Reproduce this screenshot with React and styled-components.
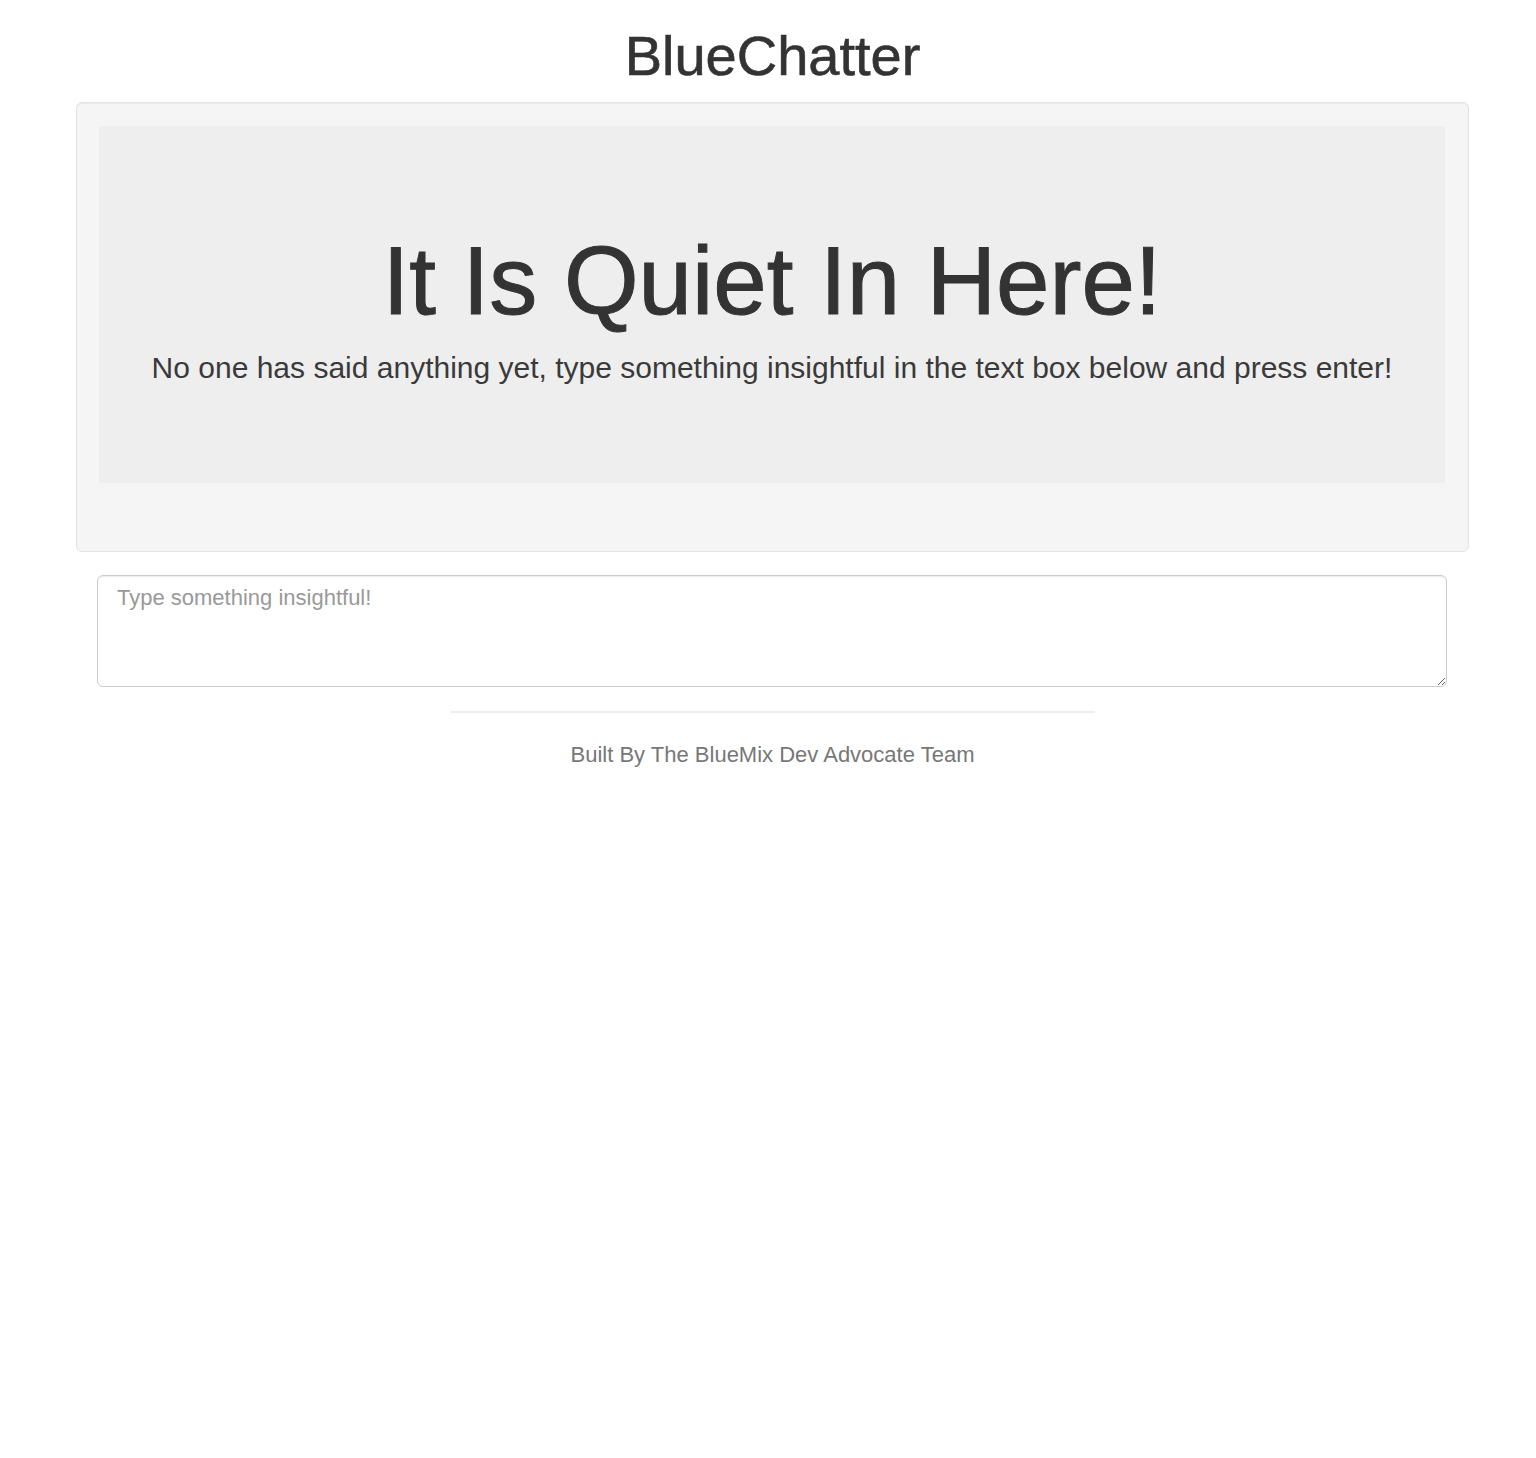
import React from 'react';
import styled, { createGlobalStyle } from 'styled-components';

const GlobalStyle = createGlobalStyle`
  html, body {
    margin: 0;
    padding: 0;
    background: #ffffff;
  }
  body {
    font-family: "Liberation Sans", Arial, Helvetica, sans-serif;
    color: #333333;
  }
  * {
    box-sizing: border-box;
  }
`;

const Page = styled.div`
  padding: 0 67px 40px 76px;
`;

const Title = styled.h1`
  margin: 0;
  padding-top: 25px;
  font-size: 56px;
  font-weight: 400;
  line-height: 62px;
  text-align: center;
  color: #333333;
  -webkit-text-stroke: 0.6px #333333;
`;

const Well = styled.div`
  margin-top: 15px;
  padding: 23px 23px 68px 22px;
  background: #f5f5f5;
  border: 1px solid #e3e3e3;
  border-radius: 6px;
  box-shadow: inset 0 1px 1px rgba(0, 0, 0, 0.05);
`;

const Jumbotron = styled.div`
  padding: 102px 20px 93px;
  background: #eeeeee;
  text-align: center;
`;

const Heading = styled.h2`
  margin: 0;
  font-size: 96px;
  font-weight: 400;
  line-height: 106px;
  color: #333333;
  -webkit-text-stroke: 1px #333333;
`;

const Lead = styled.p`
  margin: 11px 0 0;
  font-size: 30px;
  font-weight: 300;
  line-height: 45px;
  white-space: nowrap;
  color: #3a3a3a;
`;

const MessageBox = styled.textarea`
  display: block;
  width: calc(100% - 43px);
  height: 112px;
  margin: 23px 22px 0 21px;
  padding: 7px 19px;
  font-family: "Liberation Sans", Arial, Helvetica, sans-serif;
  font-size: 22px;
  line-height: 30px;
  color: #555555;
  background: #ffffff;
  border: 1px solid #cccccc;
  border-radius: 6px;
  box-shadow: inset 0 1px 1px rgba(0, 0, 0, 0.075);
  &::placeholder {
    color: #999999;
  }
  &:focus {
    outline: none;
  }
`;

const Rule = styled.hr`
  width: 645px;
  margin: 24px auto 0;
  border: 0;
  border-top: 2px solid #eeeeee;
`;

const Footer = styled.p`
  margin: 27px 0 0;
  font-size: 22px;
  line-height: 30px;
  text-align: center;
  color: #777777;
`;

export default function App() {
  return (
    <>
      <GlobalStyle />
      <Page>
        <Title>BlueChatter</Title>
        <Well>
          <Jumbotron>
            <Heading>It Is Quiet In Here!</Heading>
            <Lead>
              No one has said anything yet, type something insightful in the text box below and press enter!
            </Lead>
          </Jumbotron>
        </Well>
        <MessageBox placeholder="Type something insightful!" />
        <Rule />
        <Footer>Built By The BlueMix Dev Advocate Team</Footer>
      </Page>
    </>
  );
}
